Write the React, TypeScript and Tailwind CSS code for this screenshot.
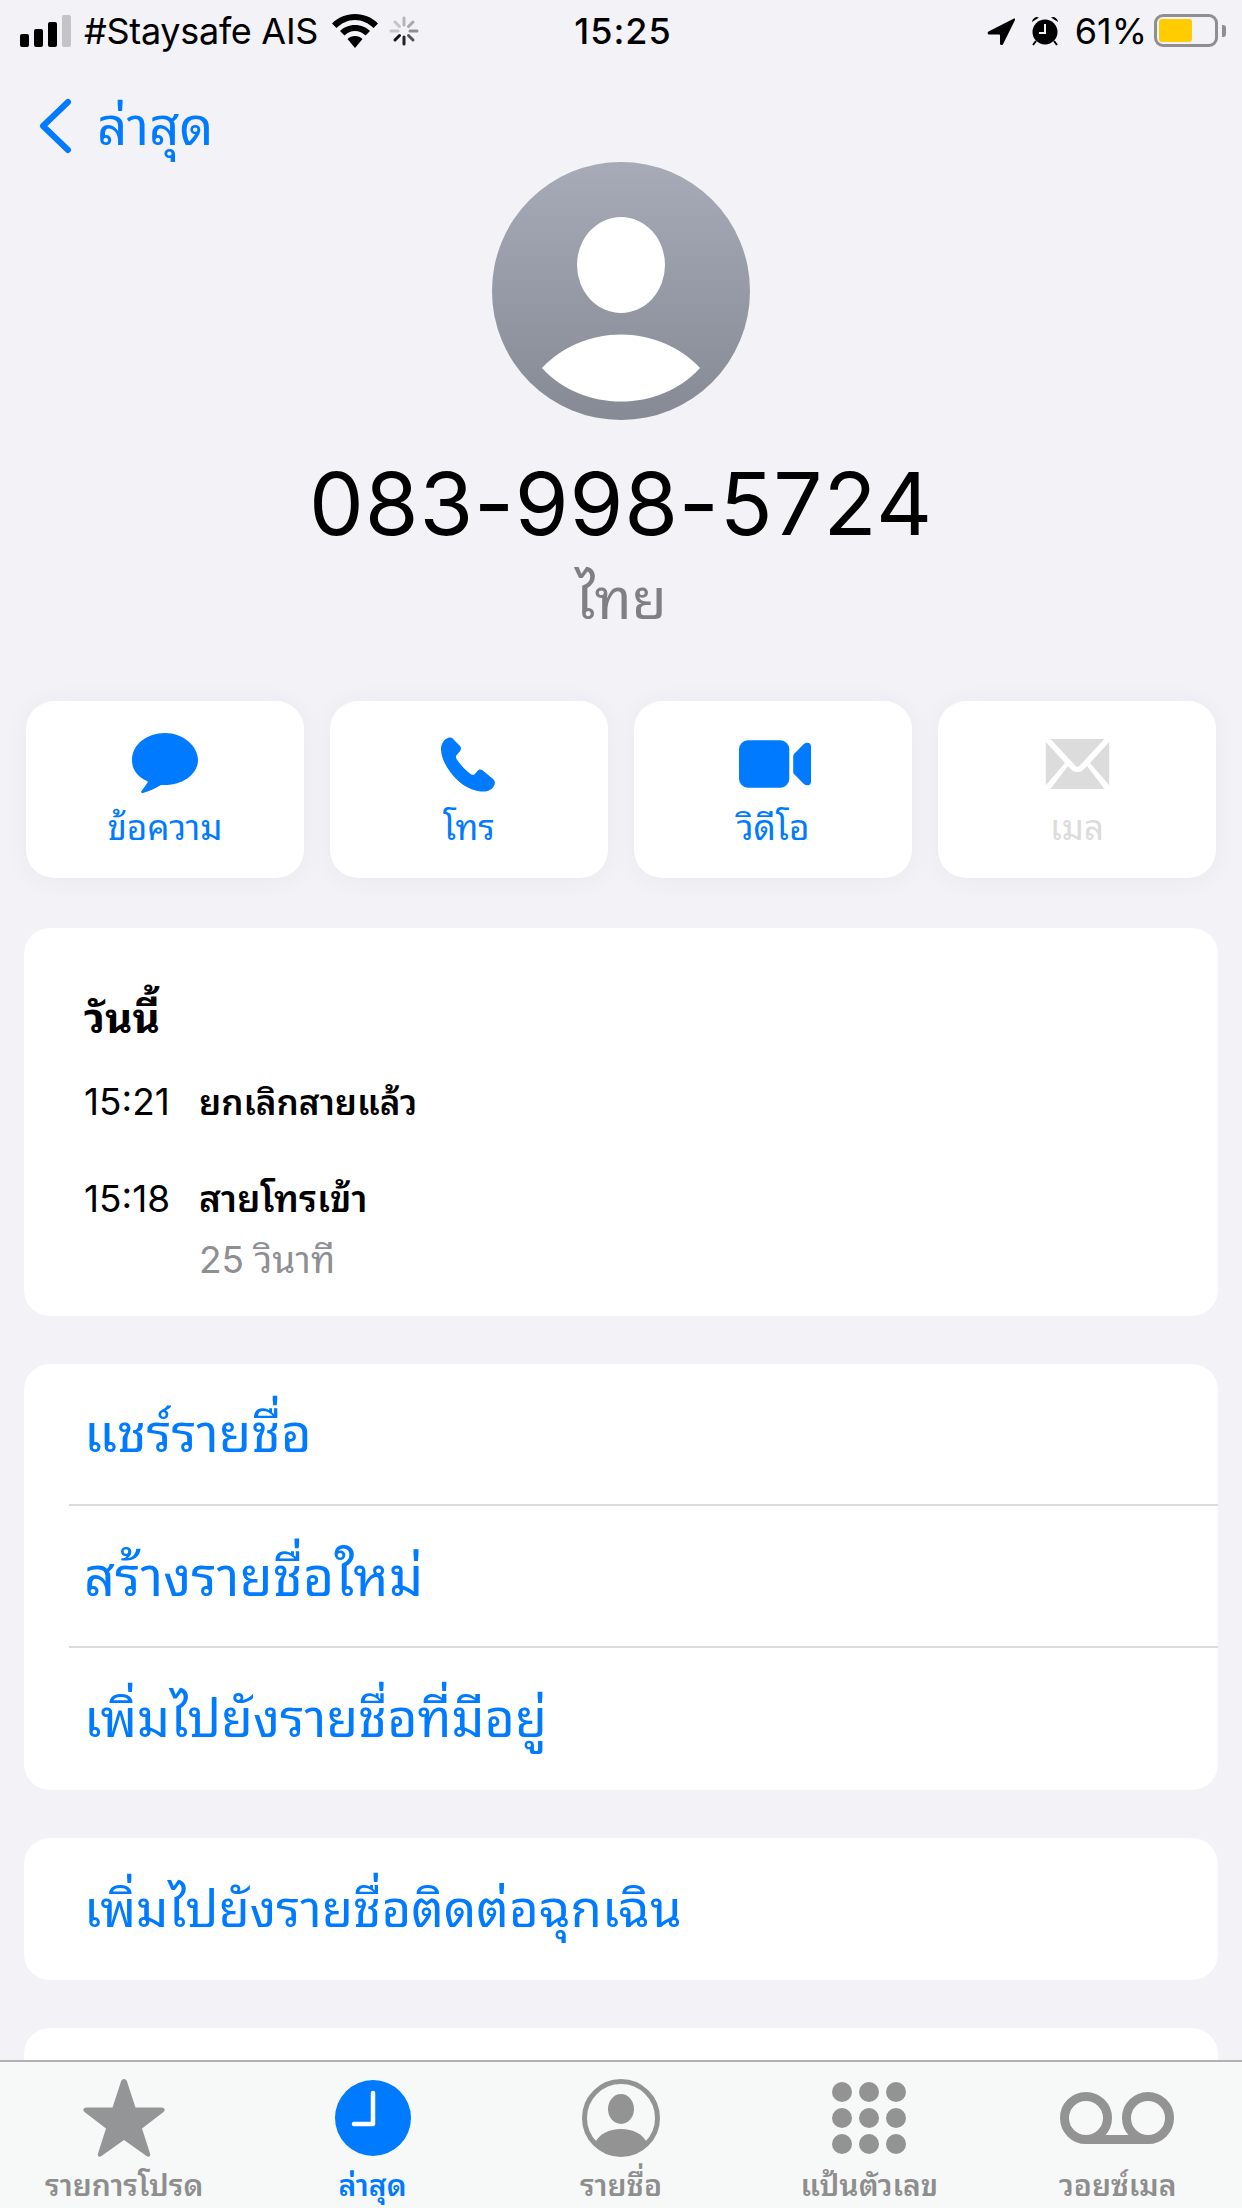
import React from "react";

const ActionButton = ({ label, icon, muted }: { label: string; icon: React.ReactNode; muted?: boolean }) => (
  <div className="flex h-[177px] w-[278px] flex-col items-center rounded-[28px] bg-white pt-[32px] shadow-[0_2px_24px_rgba(60,60,90,0.05)]">
    <div className="flex h-[62px] items-center justify-center">{icon}</div>
    <span className={`mt-[10px] text-[35px] leading-[44px] ${muted ? "text-[#dcdcdc]" : "text-[#007aff]"}`}>{label}</span>
  </div>
);

const BlueRow = ({ label, size, divider }: { label: string; size: string; divider?: boolean }) => (
  <div className="flex h-[142px] flex-col">
    <div className={`flex flex-1 items-center pl-[60px] text-[#007aff] ${size}`}>{label}</div>
    {divider && <div className="ml-[45px] h-[2px] bg-[#dcdcdf]" />}
  </div>
);

const TabItem = ({ label, icon, active }: { label: string; icon: React.ReactNode; active?: boolean }) => (
  <div className="flex flex-col items-center">
    <div className="flex h-[100px] items-center justify-center">{icon}</div>
    <span className={`-mt-[3px] text-[30px] leading-[40px] font-semibold ${active ? "text-[#007aff]" : "text-[#8e8e8e]"}`}>{label}</span>
  </div>
);

const Spinner = () => (
  <svg width="30" height="30" viewBox="0 0 30 30" strokeWidth="3" strokeLinecap="round">
    <path d="M15 2v7" stroke="#b5b5b5" />
    <path d="M24 6l-4.500 4.500" stroke="#a8a8a8" />
    <path d="M28 15h-7" stroke="#8f8f8f" />
    <path d="M24 24l-4.500-4.500" stroke="#555" />
    <path d="M15 28v-7" stroke="#222" />
    <path d="M6 24l4.500-4.500" stroke="#111" />
    <path d="M2 15h7" stroke="#c5c5c5" />
    <path d="M6 6l4.500 4.500" stroke="#c5c5c5" />
  </svg>
);

export default function App() {
  return (
    <div className="relative h-[2208px] w-[1242px] overflow-hidden bg-[#f2f2f7] font-['Inter','Noto_Sans_Thai_Looped','Noto_Sans_Thai','Noto_Sans',sans-serif] text-black">
      {/* Status bar */}
      <div className="flex h-[60px] items-center pl-[20px] pr-[16px] pt-[1px]">
        <div className="flex flex-1 items-center">
          <div className="flex h-[32px] items-end gap-[5px]">
            <div className="h-[13px] w-[9px] rounded-[2px] bg-black" />
            <div className="h-[18px] w-[9px] rounded-[2px] bg-black" />
            <div className="h-[25px] w-[9px] rounded-[2px] bg-black" />
            <div className="h-[32px] w-[9px] rounded-[2px] bg-[#c4c4c6]" />
          </div>
          <span className="ml-[13px] text-[36px] leading-none tracking-[-0.3px]">#Staysafe AIS</span>
          <svg className="ml-[14px]" width="46" height="34" viewBox="0 0 46 34">
            <path d="M23 0C14 0 6 3.500 0 9.500l4.500 4.500C9.500 9 16 6 23 6s13.500 3 18.500 8l4.500-4.500C40 3.500 32 0 23 0z" />
            <path d="M23 11c-6 0-11.500 2.500-15 6l4.500 4.500C15 19 19 17 23 17s8 2 10.500 4.500L38 17c-3.500-3.500-9-6-15-6z" />
            <path d="M23 22c-3 0-5.500 1-7.500 3L23 34l7.500-9c-2-2-4.500-3-7.500-3z" />
          </svg>
          <span className="ml-[11px] flex"><Spinner /></span>
        </div>
        <span className="text-[36px] leading-none font-medium tracking-[1px]">15:25</span>
        <div className="flex flex-1 items-center justify-end">
          <svg width="28" height="28" viewBox="0 0 28 28">
            <path d="M27 1.500 1.500 14.500c-1.500.8-1 3 .7 3H12c.6 0 1 .4 1 1v8c0 1.700 2.200 2.200 3 .7L28 3c.5-1-.2-1.900-1-1.500z" />
          </svg>
          <svg className="ml-[16px]" width="28" height="30" viewBox="0 0 28 30">
            <circle cx="14" cy="16" r="12.500" />
            <path d="M1 6a5 5 0 0 1 7-4.500zM27 6a5 5 0 0 0-7-4.500z" />
            <path d="M5 25l-3 4M23 25l3 4" stroke="#000" strokeWidth="2" />
            <path d="M14 8v9H8" fill="none" stroke="#f2f2f7" strokeWidth="2" />
          </svg>
          <span className="ml-[16px] text-[36px] leading-none">61%</span>
          <div className="ml-[7px] flex h-[33px] w-[64px] items-center rounded-[9px] border-[3px] border-[#8e8e93] p-[2px]">
            <div className="h-[23px] w-[33px] rounded-[3px] bg-[#ffcc00]" />
          </div>
          <div className="ml-[4px] h-[12px] w-[4px] rounded-r-[3px] bg-[#8e8e93]" />
        </div>
      </div>

      {/* Nav */}
      <div className="flex h-[102px] items-start pl-[38px] pt-[38px] text-[#007aff]">
        <svg width="34" height="56" viewBox="0 0 34 56" fill="none" stroke="#007aff" strokeWidth="6" strokeLinecap="round" strokeLinejoin="round">
          <path d="M30 4 5 28l25 24" />
        </svg>
        <span className="ml-[25px] text-[53px] leading-[56px]">ล่าสุด</span>
      </div>

      {/* Contact header */}
      <div className="flex flex-col items-center">
        <div className="flex h-[258px] w-[258px] flex-col items-center overflow-hidden rounded-full bg-gradient-to-b from-[#a6abb7] to-[#858a95]">
          <div className="mt-[55px] h-[96px] w-[88px] rounded-[50%] bg-white" />
          <svg className="mt-[21px]" width="158" height="68" viewBox="0 0 160 68">
            <path d="M0 34C20 12 50 0 80 0s60 12 80 34C140 56 110 68 80 68S20 56 0 34z" fill="#fff" />
          </svg>
        </div>
        <div className="mt-[34px] text-[87px] leading-[100px] tracking-[0.800px]">083-998-5724</div>
        <div className="mt-[14px] text-[57px] leading-[62px] text-[#808084]">ไทย</div>
      </div>

      {/* Actions */}
      <div className="mt-[71px] flex gap-[26px] px-[26px]">
        <ActionButton
          label="ข้อความ"
          icon={
            <svg width="66" height="62" viewBox="0 0 66 62" fill="#007aff">
              <path d="M33 0C15 0 0 11.500 0 27c0 10 6 17 15 21 .8.4 1 1 .5 1.800L9.500 58c-.8 1.200 0 2.300 1.500 1.900 6-1.500 12-4.500 18-7.900 1.300 0 2.700 0 4 0 18 0 33-11 33-25S51 0 33 0z" />
            </svg>
          }
        />
        <ActionButton
          label="โทร"
          icon={
            <svg className="-ml-[2px]" width="54" height="55" viewBox="0 0 56 56" fill="#007aff">
              <path d="M6 1C2.500 3 0 7 0 12c0 11 8 24 18 33 9 8 19 11 26 11 5 0 9-2 11-6 1.500-3 1-5-1-7l-11-9c-2-1.500-4-1-5.500 1l-2.500 3c-1 1-2.500 1-4 0-6-4-12-11-15-16-1-2-.5-3 .5-4l3-3.500c1.500-2 1.500-3.500.5-5.500L13 2C11.500 0 8.500-.500 6 1z" />
            </svg>
          }
        />
        <ActionButton
          label="วิดีโอ"
          icon={
            <svg className="ml-[4px]" width="72" height="48" viewBox="0 0 73 48" fill="#007aff">
              <rect x="0" y="0" width="51" height="48" rx="9" />
              <path d="M55 16c0-1 .5-2 1-2.500L66 3.500C68.500 1.500 73 2 73 6v36c0 4-4.500 4.500-7 2.500L56 34.500c-.5-.5-1-1.500-1-2.500z" />
            </svg>
          }
        />
        <ActionButton
          label="เมล"
          muted
          icon={
            <svg width="65" height="50" viewBox="0 0 66 52" fill="#dcdcdc">
              <path d="M5 0h56L35 28c-1 1-3 1-4 0z" />
              <path d="M0 3l20 22L0 48zM66 3 46 25l20 23z" />
              <path d="M5 52h56L43 28l-5 5c-3 2-7 2-10 0l-5-5z" />
            </svg>
          }
        />
      </div>

      {/* Call history */}
      <div className="mx-[24px] mt-[50px] flex h-[388px] flex-col rounded-[26px] bg-white px-[60px] pt-[62px]">
        <div className="text-[42px] leading-[56px] font-bold">วันนี้</div>
        <div className="mt-[28px] flex items-center leading-[56px]">
          <span className="w-[115px] text-[37px]">15:21</span>
          <span className="text-[35px] font-semibold">ยกเลิกสายแล้ว</span>
        </div>
        <div className="mt-[41px] flex items-center leading-[56px]">
          <span className="w-[115px] text-[37px]">15:18</span>
          <span className="text-[37px] font-semibold">สายโทรเข้า</span>
        </div>
        <div className="mt-[5px] pl-[115px] text-[37px] leading-[56px] text-[#8e8e93]">25 วินาที</div>
      </div>

      {/* Contact actions */}
      <div className="mx-[24px] mt-[48px] overflow-hidden rounded-[26px] bg-white">
        <BlueRow label="แชร์รายชื่อ" size="text-[53px]" divider />
        <BlueRow label="สร้างรายชื่อใหม่" size="text-[54px]" divider />
        <BlueRow label="เพิ่มไปยังรายชื่อที่มีอยู่" size="text-[52px]" />
      </div>

      <div className="mx-[24px] mt-[48px] overflow-hidden rounded-[26px] bg-white">
        <BlueRow label="เพิ่มไปยังรายชื่อติดต่อฉุกเฉิน" size="text-[51px]" />
      </div>

      <div className="mx-[24px] mt-[48px] h-[142px] rounded-[26px] bg-white" />

      {/* Tab bar */}
      <div className="absolute inset-x-0 bottom-0 grid h-[148px] grid-cols-5 border-t-2 border-[#b2b2b2] bg-[#f7f8f8] pt-[6px]">
        <TabItem
          label="รายการโปรด"
          icon={
            <svg width="82" height="78" viewBox="0 0 82 78" fill="#939596">
              <path d="M41 0c1.500 0 2.500 1 3 2.500l8.500 26h26c3 0 4.500 2.500 2 4.500L59 49.500l8 25c1 3-1.500 4-3.500 2.500L41 61 18.500 77c-2 1.500-4.500.5-3.500-2.500l8-25L1.500 33c-2.500-2-1-4.500 2-4.500h26L38 2.500C38.500 1 39.500 0 41 0z" />
            </svg>
          }
        />
        <TabItem
          active
          label="ล่าสุด"
          icon={
            <svg width="76" height="76" viewBox="0 0 76 76">
              <circle cx="38" cy="38" r="38" fill="#007aff" />
              <path d="M38 13v31H19" fill="none" stroke="#fff" strokeWidth="4.500" strokeLinecap="round" strokeLinejoin="round" />
            </svg>
          }
        />
        <TabItem
          label="รายชื่อ"
          icon={
            <svg width="78" height="78" viewBox="0 0 78 78">
              <circle cx="39" cy="39" r="36.500" fill="none" stroke="#939393" strokeWidth="5" />
              <ellipse cx="39" cy="30" rx="13" ry="15" fill="#939393" />
              <path d="M13 64c4-9 14-14 26-14s22 5 26 14C58 72 49 76 39 76S20 72 13 64z" fill="#939393" />
            </svg>
          }
        />
        <TabItem
          label="แป้นตัวเลข"
          icon={
            <svg width="74" height="72" viewBox="0 0 74 72" fill="#939393">
              <circle cx="10" cy="10" r="10" /><circle cx="37" cy="10" r="10" /><circle cx="64" cy="10" r="10" />
              <circle cx="10" cy="36" r="10" /><circle cx="37" cy="36" r="10" /><circle cx="64" cy="36" r="10" />
              <circle cx="10" cy="62" r="10" /><circle cx="37" cy="62" r="10" /><circle cx="64" cy="62" r="10" />
            </svg>
          }
        />
        <TabItem
          label="วอยซ์เมล"
          icon={
            <svg className="-ml-[2px]" width="114" height="52" viewBox="0 0 114 52" fill="none" stroke="#939393" strokeWidth="9">
              <circle cx="26" cy="26" r="21.500" />
              <circle cx="88" cy="26" r="21.500" />
              <path d="M26 47.500h62" />
            </svg>
          }
        />
      </div>
    </div>
  );
}
